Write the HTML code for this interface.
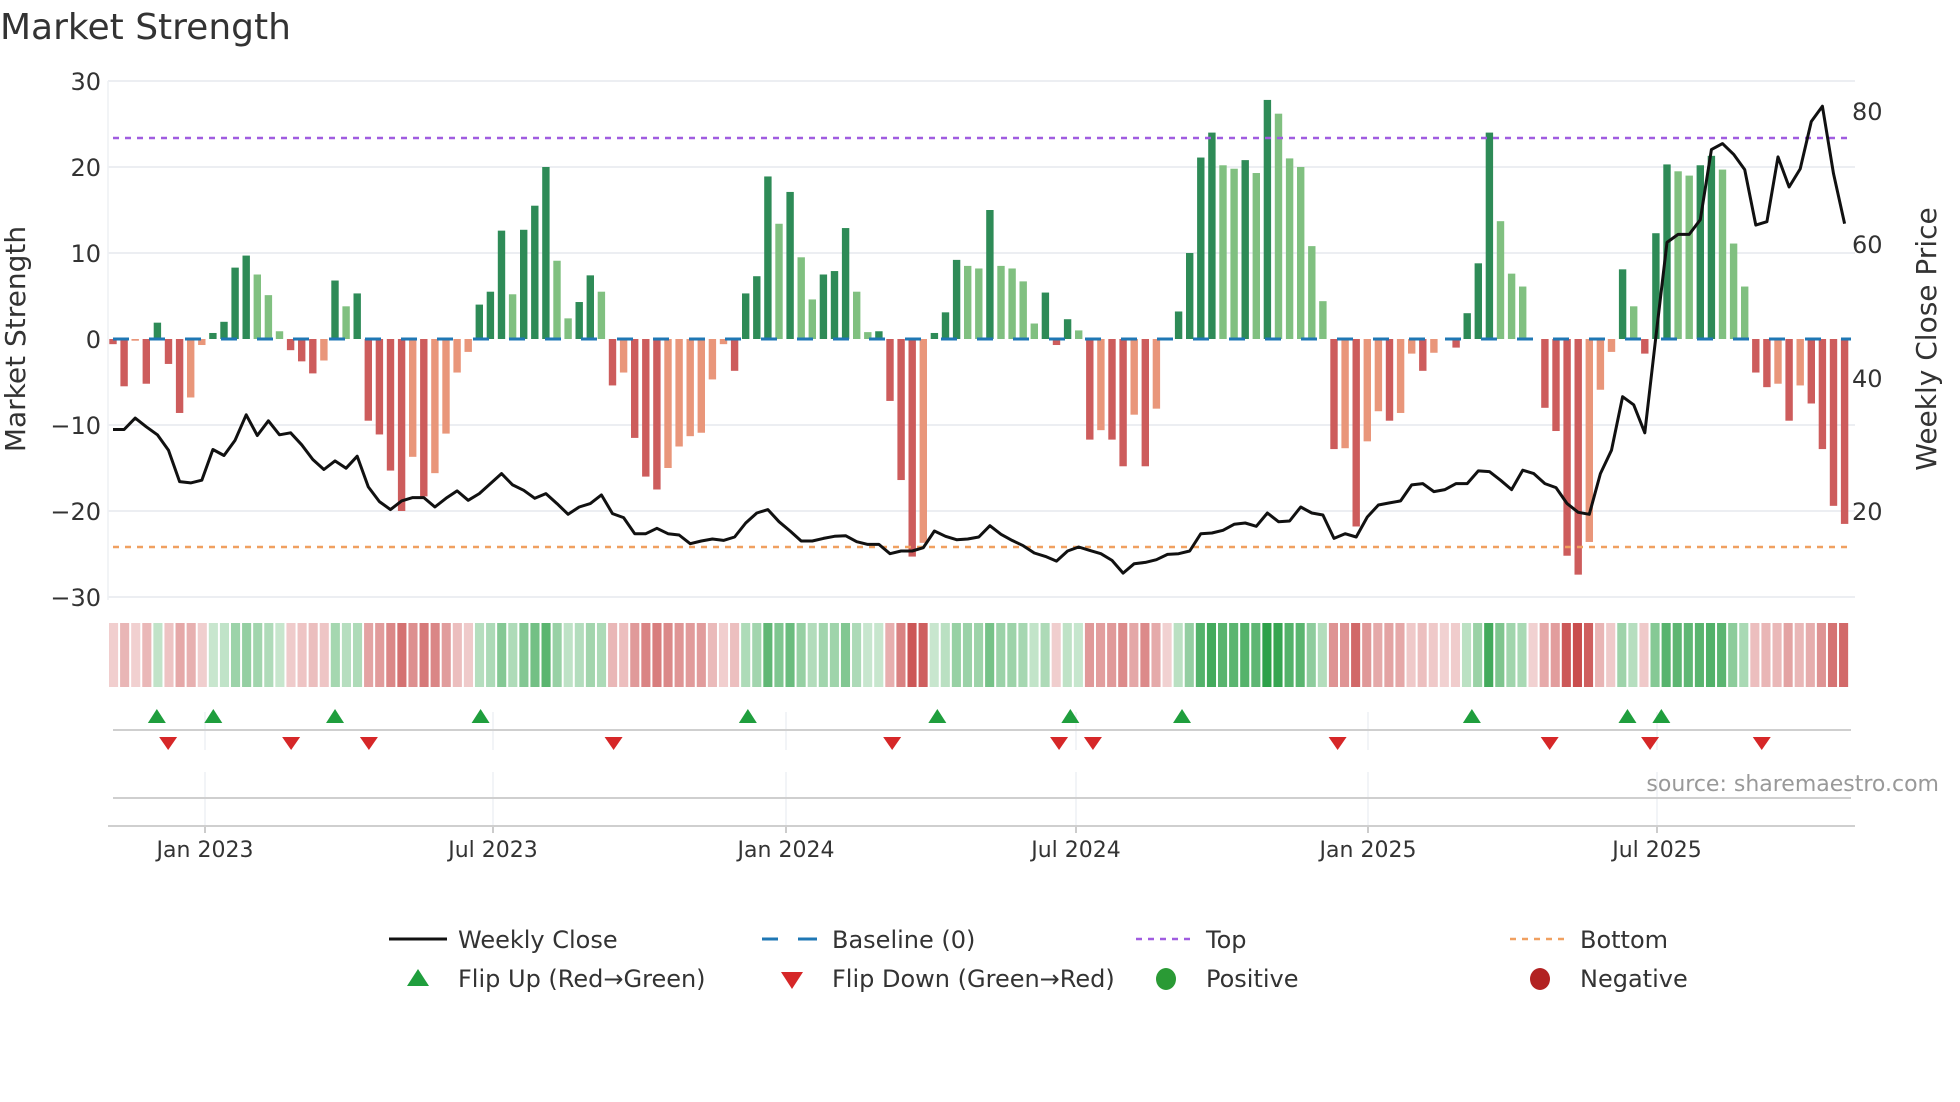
<!DOCTYPE html>
<html><head><meta charset="utf-8"><style>
html,body{margin:0;padding:0;background:#fff;}
svg{display:block;font-family:"DejaVu Sans","Liberation Sans",sans-serif;}
</style></head><body>
<svg id="s" width="1960" height="1102" viewBox="0 0 1960 1102" xmlns="http://www.w3.org/2000/svg">
<rect width="1960" height="1102" fill="#fff"/>
<text x="0" y="39" font-size="36" fill="#333">Market Strength</text>
<g id="grid"></g>
<line x1="108" y1="81" x2="108" y2="600" stroke="#eef0f4" stroke-width="1.5"/>
<g font-size="24" fill="#333" text-anchor="end">
<text x="101" y="90">30</text><text x="101" y="176">20</text><text x="101" y="262">10</text>
<text x="101" y="348">0</text><text x="101" y="434">−10</text><text x="101" y="520">−20</text><text x="101" y="606">−30</text>
</g>
<g font-size="24" fill="#333">
<text x="1852" y="120">80</text><text x="1852" y="253">60</text><text x="1852" y="387">40</text><text x="1852" y="520">20</text>
</g>
<text transform="translate(25,339) rotate(-90)" font-size="28" fill="#333" text-anchor="middle">Market Strength</text>
<text transform="translate(1936,339) rotate(-90)" font-size="28" fill="#333" text-anchor="middle">Weekly Close Price</text>
<g id="bars"></g>
<line x1="113" y1="339" x2="1851" y2="339" stroke="#1f77b4" stroke-width="3" stroke-dasharray="16,20"/>
<line x1="113" y1="138" x2="1851" y2="138" stroke="#a05ce0" stroke-width="2.5" stroke-dasharray="6,6"/>
<line x1="113" y1="547" x2="1851" y2="547" stroke="#f0a060" stroke-width="2.5" stroke-dasharray="6,6"/>
<polyline id="price" fill="none" stroke="#111" stroke-width="3" stroke-linejoin="round"/>
<g id="heat"></g>
<g id="vg" stroke="#eef0f4" stroke-width="1.5"></g>
<line x1="113" y1="730" x2="1851" y2="730" stroke="#cfcfcf" stroke-width="2"/>
<line x1="113" y1="798" x2="1851" y2="798" stroke="#cfcfcf" stroke-width="2"/>
<line x1="108" y1="826" x2="1855" y2="826" stroke="#cfcfcf" stroke-width="2"/>
<g id="marks"></g>
<text x="1939" y="791" font-size="22" fill="#999" text-anchor="end">source: sharemaestro.com</text>
<g font-size="22" fill="#333" text-anchor="middle">
<text x="205" y="857">Jan 2023</text><text x="493" y="857">Jul 2023</text><text x="786" y="857">Jan 2024</text>
<text x="1076" y="857">Jul 2024</text><text x="1368" y="857">Jan 2025</text><text x="1657" y="857">Jul 2025</text>
</g>
<g font-size="24" fill="#333">
<line x1="389" y1="939" x2="447" y2="939" stroke="#111" stroke-width="3"/>
<text x="458" y="948">Weekly Close</text>
<line x1="762" y1="939" x2="817" y2="939" stroke="#1f77b4" stroke-width="3" stroke-dasharray="16,20"/>
<line x1="798" y1="939" x2="817" y2="939" stroke="#1f77b4" stroke-width="3"/>
<text x="832" y="948">Baseline (0)</text>
<line x1="1136" y1="939" x2="1190" y2="939" stroke="#a05ce0" stroke-width="2.5" stroke-dasharray="6,6"/>
<text x="1206" y="948">Top</text>
<line x1="1510" y1="939" x2="1565" y2="939" stroke="#f0a060" stroke-width="2.5" stroke-dasharray="6,6"/>
<text x="1580" y="948">Bottom</text>
<polygon points="418,969 429,986 407,986" fill="#1f9e3d"/>
<text x="458" y="987">Flip Up (Red→Green)</text>
<polygon points="781,972 803,972 792,989" fill="#d62728"/>
<text x="832" y="987">Flip Down (Green→Red)</text>
<ellipse cx="1166" cy="979" rx="10" ry="11" fill="#2a9a35"/>
<text x="1206" y="987">Positive</text>
<ellipse cx="1540" cy="979" rx="10" ry="11" fill="#b22222"/>
<text x="1580" y="987">Negative</text>
</g>
</svg>
<script>
var NS="http://www.w3.org/2000/svg";
function el(p,t,a){var e=document.createElementNS(NS,t);for(var k in a)e.setAttribute(k,a[k]);p.appendChild(e);return e;}
var B=[[-0.6,'R'],[-5.5,'R'],[-0.2,'S'],[-5.2,'R'],[1.9,'D'],[-2.9,'R'],[-8.6,'R'],[-6.8,'S'],[-0.7,'S'],[0.7,'D'],
[2,'D'],[8.3,'D'],[9.7,'D'],[7.5,'L'],[5.1,'L'],[0.9,'L'],[-1.3,'R'],[-2.6,'R'],[-4,'R'],[-2.5,'S'],
[6.8,'D'],[3.8,'L'],[5.3,'D'],[-9.5,'R'],[-11.1,'R'],[-15.3,'R'],[-20,'R'],[-13.7,'S'],[-18.3,'R'],[-15.6,'S'],
[-11,'S'],[-3.9,'S'],[-1.5,'S'],[4,'D'],[5.5,'D'],[12.6,'D'],[5.2,'L'],[12.7,'D'],[15.5,'D'],[20,'D'],
[9.1,'L'],[2.4,'L'],[4.3,'D'],[7.4,'D'],[5.5,'L'],[-5.4,'R'],[-3.9,'S'],[-11.5,'R'],[-16,'R'],[-17.5,'R'],
[-15,'S'],[-12.5,'S'],[-11.3,'S'],[-10.9,'S'],[-4.7,'S'],[-0.6,'S'],[-3.7,'R'],[5.3,'D'],[7.3,'D'],[18.9,'D'],
[13.4,'L'],[17.1,'D'],[9.5,'L'],[4.6,'L'],[7.5,'D'],[7.9,'D'],[12.9,'D'],[5.5,'L'],[0.8,'L'],[0.9,'D'],
[-7.2,'R'],[-16.4,'R'],[-25.3,'R'],[-23.7,'S'],[0.7,'D'],[3.1,'D'],[9.2,'D'],[8.5,'L'],[8.2,'L'],[15,'D'],
[8.5,'L'],[8.2,'L'],[6.7,'L'],[1.8,'L'],[5.4,'D'],[-0.7,'R'],[2.3,'D'],[1,'L'],[-11.7,'R'],[-10.6,'S'],
[-11.7,'R'],[-14.8,'R'],[-8.8,'S'],[-14.8,'R'],[-8.1,'S'],[0,'D'],[3.2,'D'],[10,'D'],[21.1,'D'],[24,'D'],
[20.2,'L'],[19.8,'L'],[20.8,'D'],[19.3,'L'],[27.8,'D'],[26.2,'L'],[21,'L'],[20,'L'],[10.8,'L'],[4.4,'L'],
[-12.8,'R'],[-12.7,'S'],[-21.8,'R'],[-11.9,'S'],[-8.4,'S'],[-9.5,'R'],[-8.6,'S'],[-1.7,'S'],[-3.7,'R'],[-1.6,'S'],
[0,'S'],[-1,'R'],[3,'D'],[8.8,'D'],[24,'D'],[13.7,'L'],[7.6,'L'],[6.1,'L'],[0,'S'],[-8,'R'],
[-10.7,'R'],[-25.2,'R'],[-27.4,'R'],[-23.6,'S'],[-5.9,'S'],[-1.5,'S'],[8.1,'D'],[3.8,'L'],[-1.7,'R'],[12.3,'D'],
[20.3,'D'],[19.5,'L'],[19,'L'],[20.2,'D'],[21.3,'D'],[19.7,'L'],[11.1,'L'],[6.1,'L'],[-3.9,'R'],[-5.6,'R'],
[-5.2,'S'],[-9.5,'R'],[-5.4,'S'],[-7.5,'R'],[-12.8,'R'],[-19.4,'R'],[-21.5,'R']];
var P=[32.4,32.4,34.1,32.8,31.6,29.3,24.6,24.4,24.8,29.4,28.5,30.8,34.6,31.5,33.7,31.6,31.9,30.1,27.9,26.4,
27.7,26.6,28.4,23.8,21.6,20.4,21.7,22.2,22.2,20.8,22.1,23.2,21.8,22.8,24.3,25.8,24.1,23.3,22.1,22.8,
21.3,19.7,20.8,21.3,22.6,19.8,19.2,16.8,16.8,17.6,16.8,16.6,15.3,15.7,16,15.8,16.3,18.4,19.9,20.4,
18.6,17.2,15.7,15.7,16.1,16.4,16.5,15.6,15.2,15.2,13.8,14.2,14.2,14.7,17.2,16.4,15.9,16,16.3,18,
16.7,15.8,15,13.9,13.4,12.7,14.2,14.8,14.3,13.8,12.8,10.9,12.3,12.5,12.9,13.7,13.8,14.2,16.8,16.9,
17.3,18.2,18.4,17.9,19.9,18.6,18.7,20.8,19.9,19.6,16.1,16.8,16.3,19.3,21.1,21.4,21.7,24.1,24.3,23.1,
23.4,24.3,24.3,26.2,26.1,24.8,23.4,26.3,25.8,24.3,23.7,21.3,20,19.7,25.8,29.3,37.3,36.1,31.9,46.3,
60.4,61.6,61.6,63.8,74.3,75.2,73.6,71.3,63,63.5,73.2,68.7,71.4,78.5,80.8,70.7,63.2];
var col={D:'#2e8b57',L:'#80c080',R:'#cd5c5c',S:'#e9967a'};
var g=document.getElementById('grid');
[30,20,10,-10,-20,-30].forEach(function(v){var y=339-v*8.6;el(g,'line',{x1:108,x2:1855,y1:y,y2:y,stroke:'#eceef2','stroke-width':2});});
var b=document.getElementById('bars'),h=document.getElementById('heat');
function mix(a,c,t){var r=[];for(var i=0;i<3;i++)r.push(Math.round(a[i]+(c[i]-a[i])*t));return 'rgb('+r.join(',')+')';}
B.forEach(function(d,i){var x=113+i*11.1,v=d[0],y=339-Math.max(v,0)*8.6,hh=Math.abs(v)*8.6;
 if(hh>0.3)el(b,'rect',{x:x-3.7,y:y,width:7.4,height:hh,fill:col[d[1]]});
 var t=Math.min(Math.abs(v)/28,1);var c=v>0?mix([232,245,234],[44,160,72],0.15+0.85*t):mix([246,224,224],[200,74,74],0.1+0.9*t);
 el(h,'rect',{x:108+i*11.09+1,y:623,width:9.1,height:64,fill:c});
});
var pts=P.map(function(p,i){return (113+i*11.1).toFixed(1)+','+(512.3-(p-20)*6.68).toFixed(1);}).join(' ');
document.getElementById('price').setAttribute('points',pts);
var vg=document.getElementById('vg');
[205,493,786,1076,1368,1657].forEach(function(x){el(vg,'line',{x1:x,x2:x,y1:712,y2:750});el(vg,'line',{x1:x,x2:x,y1:772,y2:826});
 el(vg,'line',{x1:x,x2:x,y1:826,y2:833,stroke:'#bbb'});});
var m=document.getElementById('marks');
[125,170,267,383,596,747,853,942,1173,1297,1324].forEach(function(x){x*=1.2548;el(m,'polygon',{points:x+',709 '+(x+9)+',723 '+(x-9)+',723',fill:'#1f9e3d'});});
[134,232,294,489,711,844,871,1066,1235,1315,1404].forEach(function(x){x*=1.2548;el(m,'polygon',{points:(x-9)+',737 '+(x+9)+',737 '+x+',750',fill:'#d62728'});});
</script>
</body></html>
